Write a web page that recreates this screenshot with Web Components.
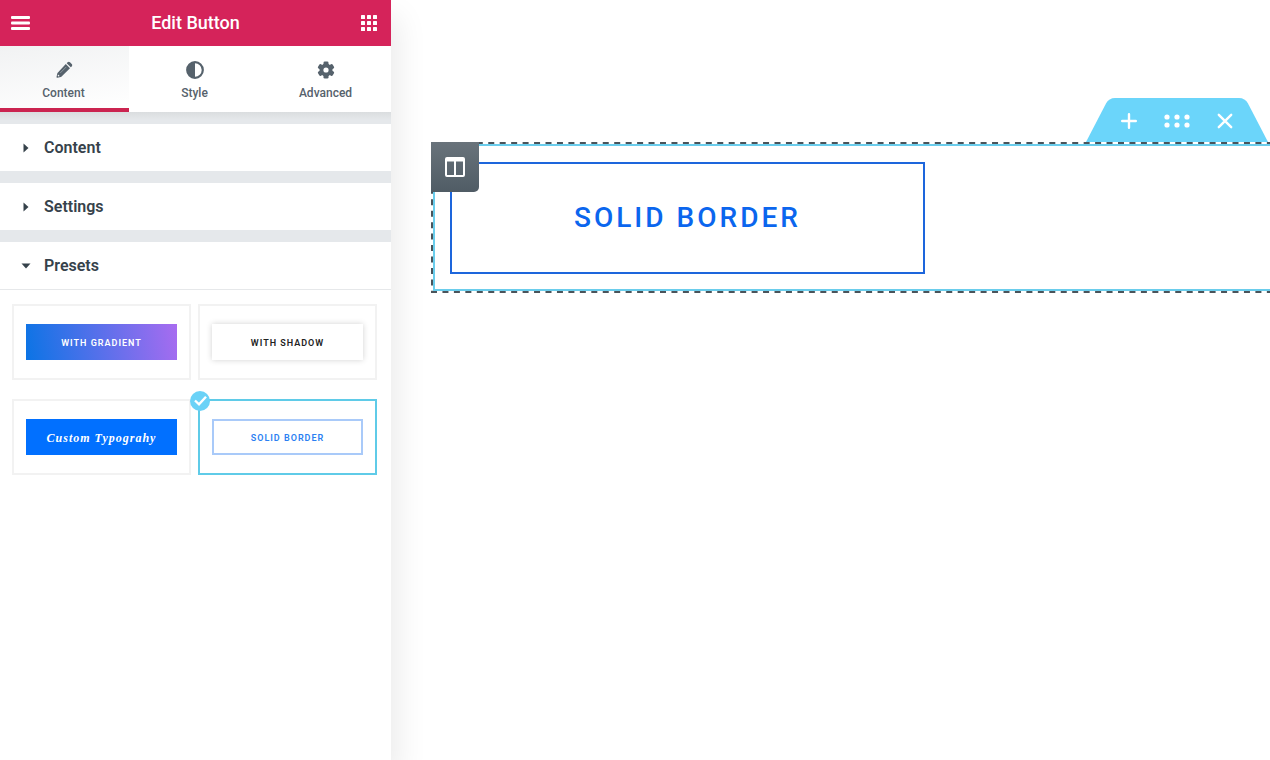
<!DOCTYPE html>
<html lang="en">
<head>
<meta charset="UTF-8">
<meta name="viewport" content="width=device-width, initial-scale=1.0">
<title>Edit Button</title>
<style>
    * { box-sizing: border-box; }

    body {
        margin: 0;
        font-family: Roboto, "Liberation Sans", sans-serif;
        background: #fff;
        color: #36424b;
    }
</style>
</head>
<body>
<editor-app>
    <editor-panel slot="panel" heading="Edit Button">
        <panel-tab slot="tabs" icon="pencil" active>Content</panel-tab>
        <panel-tab slot="tabs" icon="contrast">Style</panel-tab>
        <panel-tab slot="tabs" icon="gear">Advanced</panel-tab>

        <panel-section heading="Content"></panel-section>
        <panel-section heading="Settings"></panel-section>
        <panel-section heading="Presets" open>
            <preset-card variant="gradient">WITH GRADIENT</preset-card>
            <preset-card variant="shadow">WITH SHADOW</preset-card>
            <preset-card variant="type">Custom Typograhy</preset-card>
            <preset-card variant="border" selected>SOLID BORDER</preset-card>
        </panel-section>
    </editor-panel>

    <canvas-section>
        <canvas-button>SOLID BORDER</canvas-button>
    </canvas-section>
</editor-app>

<script>
/* ========================================
   Shared
   ======================================== */

const RESET = `
    *, *::before, *::after { box-sizing: border-box; }
    button {
        margin: 0;
        padding: 0;
        border: 0;
        background: none;
        color: inherit;
        font: inherit;
        cursor: pointer;
    }
    svg { display: block; }
`;

const TAB_ICONS = {
    pencil: `<svg width="18" height="18" viewBox="0 0 18 18" fill="currentColor">
        <path d="M10.800 3l4.200 4.200-8.400 8.400c-.2.2-.4.3-.7.4l-3.600.8c-.6.1-.9-.2-.8-.8l.8-3.600c.1-.3.2-.5.4-.7z"/>
        <path d="M11.700 2.200l.9-.9c.7-.7 1.700-.7 2.400 0l1.700 1.700c.7.7.7 1.700 0 2.400l-.9.9z"/>
        <path d="M5.300 11.900l6-6" stroke="#9aa4ac" stroke-width="0.8"/>
        <path d="M3 13.400l1.700 1.700-1.300.3-.7-.7z" fill="#fff"/>
    </svg>`,
    contrast: `<svg width="18" height="18" viewBox="0 0 18 18">
        <circle cx="9" cy="9" r="7.800" fill="none" stroke="currentColor" stroke-width="2.200"/>
        <path d="M9 1a8 8 0 0 0 0 16z" fill="currentColor"/>
    </svg>`,
    gear: `<svg width="18" height="18" viewBox="0 0 18 18">
        <g fill="currentColor">
            <circle cx="9" cy="9" r="6.500"/>
            <rect x="6.500" y="0.500" width="5" height="17" rx="1.300"/>
            <rect x="6.500" y="0.500" width="5" height="17" rx="1.300" transform="rotate(60 9 9)"/>
            <rect x="6.500" y="0.500" width="5" height="17" rx="1.300" transform="rotate(120 9 9)"/>
        </g>
        <circle cx="9" cy="9" r="2.600" fill="#fff"/>
    </svg>`
};

/* ========================================
   EditorApp - side panel + canvas
   ======================================== */

class EditorApp extends HTMLElement {
    constructor() {
        super();
        this.attachShadow({ mode: 'open' });
    }

    connectedCallback() {
        this.shadowRoot.innerHTML = `
        <style>
            ${RESET}
            :host {
                display: flex;
                min-height: 100vh;
                overflow: hidden;
            }
            main {
                flex: 1;
                min-width: 0;
                padding: 142px 0 40px 40px;
            }
        </style>
        <slot name="panel"></slot>
        <main><slot></slot></main>
        `;
    }
}

/* ========================================
   EditorPanel
   ======================================== */

class EditorPanel extends HTMLElement {
    constructor() {
        super();
        this.attachShadow({ mode: 'open' });
    }

    connectedCallback() {
        const heading = this.getAttribute('heading') || '';
        let dots = '';
        for (const y of [0, 6, 12]) {
            for (const x of [0, 6, 12]) {
                dots += `<rect x="${x}" y="${y}" width="4" height="4" rx="0.6"/>`;
            }
        }

        this.shadowRoot.innerHTML = `
        <style>
            ${RESET}
            :host {
                flex: none;
                width: 391px;
                background: #fff;
                box-shadow: 8px 16px 28px rgba(0, 0, 0, 0.08);
            }
            header {
                display: flex;
                align-items: center;
                justify-content: space-between;
                height: 46px;
                padding: 0 14px 0 11px;
                background: #d5235a;
                color: #fff;
            }
            h1 {
                margin: 0;
                font-size: 18px;
                line-height: 24px;
                font-weight: 500;
            }
            nav {
                display: grid;
                grid-template-columns: repeat(3, 1fr);
                gap: 2px;
                height: 66px;
            }
            .sections {
                display: flex;
                flex-direction: column;
                gap: 12px;
                padding-top: 12px;
                background: linear-gradient(#dadddf, #e5e8eb 8px);
            }
        </style>
        <header>
            <button aria-label="Menu">
                <svg width="19" height="14" viewBox="0 0 19 14" fill="#fff">
                    <rect width="19" height="3" rx="1"/>
                    <rect y="5.500" width="19" height="3" rx="1"/>
                    <rect y="11" width="19" height="3" rx="1"/>
                </svg>
            </button>
            <h1>${heading}</h1>
            <button aria-label="Widgets">
                <svg width="16" height="16" viewBox="0 0 16 16" fill="#fff">${dots}</svg>
            </button>
        </header>
        <nav><slot name="tabs"></slot></nav>
        <div class="sections"><slot></slot></div>
        `;
    }
}

/* ========================================
   PanelTab
   ======================================== */

class PanelTab extends HTMLElement {
    constructor() {
        super();
        this.attachShadow({ mode: 'open' });
    }

    connectedCallback() {
        this.shadowRoot.innerHTML = `
        <style>
            ${RESET}
            :host { display: flex; }
            button {
                flex: 1;
                display: flex;
                flex-direction: column;
                align-items: center;
                gap: 6px;
                padding: 15px 2px 0 0;
                border-bottom: 4px solid transparent;
                color: #56626c;
                font-size: 12px;
                line-height: 16px;
                font-weight: 500;
            }
            :host([active]) button {
                background: linear-gradient(170deg, #f1f2f3, #fff);
                border-bottom-color: #cb2450;
            }
        </style>
        <button>
            ${TAB_ICONS[this.getAttribute('icon')]}
            <slot></slot>
        </button>
        `;
    }
}

/* ========================================
   PanelSection - collapsible group
   ======================================== */

class PanelSection extends HTMLElement {
    constructor() {
        super();
        this.attachShadow({ mode: 'open' });
    }

    connectedCallback() {
        const heading = this.getAttribute('heading') || '';

        this.shadowRoot.innerHTML = `
        <style>
            ${RESET}
            :host {
                display: block;
                background: #fff;
            }
            h2 { margin: 0; }
            button {
                display: flex;
                align-items: center;
                gap: 12px;
                width: 100%;
                height: 47px;
                padding-left: 20px;
                font-size: 16px;
                line-height: 20px;
                font-weight: 600;
                text-align: left;
            }
            .caret { transform: rotate(-90deg); }
            .body { display: none; }
            :host([open]) .caret { transform: none; }
            :host([open]) .body {
                display: grid;
                grid-template-columns: repeat(2, 1fr);
                gap: 19px 7px;
                padding: 14px 14px 20px 12px;
                border-top: 1px solid #e6e8ea;
            }
        </style>
        <h2>
            <button>
                <svg class="caret" width="12" height="12" viewBox="0 0 12 12" fill="currentColor">
                    <path d="M1.500 3.500h9L6 8.500z"/>
                </svg>
                ${heading}
            </button>
        </h2>
        <div class="body"><slot></slot></div>
        `;

        this.shadowRoot.querySelector('button').addEventListener('click', () => {
            this.toggleAttribute('open');
        });
    }
}

/* ========================================
   PresetCard
   ======================================== */

class PresetCard extends HTMLElement {
    constructor() {
        super();
        this.attachShadow({ mode: 'open' });
    }

    connectedCallback() {
        const variant = this.getAttribute('variant');
        const selected = this.hasAttribute('selected');

        this.shadowRoot.innerHTML = `
        <style>
            ${RESET}
            :host {
                display: block;
                position: relative;
            }
            button {
                display: flex;
                align-items: center;
                width: 100%;
                height: 76px;
                padding: 0 12px;
                border: 2px solid #f2f2f2;
            }
            :host([selected]) button { border-color: #5fcbe8; }
            .preview {
                flex: 1;
                height: 36px;
                line-height: 38px;
                font-size: 9px;
                font-weight: 600;
                letter-spacing: 1px;
                text-align: center;
                white-space: nowrap;
            }
            .gradient {
                background: linear-gradient(80deg, #0b74e5, #a86cf0);
                color: #fff;
            }
            .shadow {
                background: #fff;
                box-shadow: 0 0 6px rgba(0, 0, 0, 0.18);
                color: #222;
            }
            .type {
                background: #0170ff;
                color: #fff;
                font-family: "Liberation Serif", serif;
                font-size: 12px;
                font-weight: 700;
                font-style: italic;
            }
            .border {
                border: 2px solid #a9caf9;
                line-height: 34px;
                color: #2b7ff2;
            }
            .check {
                position: absolute;
                top: -8px;
                left: -8px;
            }
        </style>
        <button aria-pressed="${selected}">
            <span class="preview ${variant}"><slot></slot></span>
        </button>
        ${selected ? `<svg class="check" width="20" height="20" viewBox="0 0 20 20">
            <circle cx="10" cy="10" r="10" fill="#6ad2f7"/>
            <path d="M5 9.500l4 3.800 7-7.600" fill="none" stroke="#fff" stroke-width="2.400"/>
        </svg>` : ''}
        `;
    }
}

/* ========================================
   CanvasSection - outlined row with its handles
   ======================================== */

class CanvasSection extends HTMLElement {
    constructor() {
        super();
        this.attachShadow({ mode: 'open' });
    }

    connectedCallback() {
        this.shadowRoot.innerHTML = `
        <style>
            ${RESET}
            :host {
                display: block;
                position: relative;
                padding: 2px 0 2px 2px;
            }
            .column {
                padding: 16px 0 15px 15px;
                border: 2px solid #6acdec;
                border-right: 0;
            }
            /* dashes run along the outside of the column border */
            .outline {
                position: absolute;
                inset: 0;
                width: 100%;
                height: 100%;
                pointer-events: none;
            }
            .handle {
                position: absolute;
                top: 0;
                left: 0;
                display: grid;
                place-items: center;
                width: 48px;
                height: 50px;
                border-radius: 0 0 5px 0;
                background: linear-gradient(#69737b, #505c65);
            }
            .toolbar {
                position: absolute;
                right: 2px;
                bottom: 100%;
                width: 182px;
                height: 44px;
            }
            .shape {
                position: absolute;
                inset: 0;
            }
            .actions {
                position: relative;
                display: flex;
                align-items: center;
                justify-content: space-between;
                height: 100%;
                padding: 2px 35px 0;
            }
        </style>
        <div class="column"><slot></slot></div>
        <div class="toolbar">
            <svg class="shape" width="182" height="44" viewBox="0 0 182 44">
                <path d="M0 44L20 5.500Q23 0 29 0H153Q159 0 162 5.500L182 44z" fill="#6bd5fa"/>
            </svg>
            <div class="actions">
                <button aria-label="Add section">
                    <svg width="16" height="16" viewBox="0 0 16 16" stroke="#fff" stroke-width="2.400" stroke-linecap="round">
                        <path d="M8 1.200v13.600M1.200 8h13.600"/>
                    </svg>
                </button>
                <button aria-label="Move section">
                    <svg width="26" height="16" viewBox="0 0 26 16" fill="#fff">
                        <circle cx="3" cy="4" r="2.600"/><circle cx="13" cy="4" r="2.600"/><circle cx="23" cy="4" r="2.600"/>
                        <circle cx="3" cy="12" r="2.600"/><circle cx="13" cy="12" r="2.600"/><circle cx="23" cy="12" r="2.600"/>
                    </svg>
                </button>
                <button aria-label="Delete section">
                    <svg width="16" height="16" viewBox="0 0 16 16" stroke="#fff" stroke-width="2.400" stroke-linecap="round">
                        <path d="M1.800 1.800l12.400 12.400M14.200 1.800L1.800 14.200"/>
                    </svg>
                </button>
            </div>
        </div>
        <svg class="outline" fill="none" stroke-width="2">
            <line stroke="#fff" x1="0" y1="1" x2="100%" y2="1"/>
            <g stroke="#4a545b" stroke-dasharray="6 5.450">
                <line x1="0" y1="1" x2="100%" y2="1"/>
                <line x1="1" y1="0" x2="1" y2="100%"/>
                <line x1="0" y1="100%" x2="100%" y2="100%" transform="translate(0 -1)"/>
            </g>
        </svg>
        <button class="handle" aria-label="Edit column">
            <svg width="20" height="20" viewBox="0 0 20 20" fill="none" stroke="#fff">
                <rect x="1" y="1" width="18" height="18" rx="1" stroke-width="2"/>
                <path d="M10 1v18" stroke-width="2"/>
                <path d="M1 3h18" stroke-width="3"/>
            </svg>
        </button>
        `;
    }
}

/* ========================================
   CanvasButton
   ======================================== */

class CanvasButton extends HTMLElement {
    constructor() {
        super();
        this.attachShadow({ mode: 'open' });
    }

    connectedCallback() {
        this.shadowRoot.innerHTML = `
        <style>
            ${RESET}
            :host { display: block; }
            button {
                display: block;
                padding: 38px 122px;
                border: 2px solid #1d66dc;
                color: #0b66ee;
                font-size: 28px;
                line-height: 32px;
                font-weight: 500;
                letter-spacing: 3px;
                white-space: nowrap;
            }
        </style>
        <button><slot></slot></button>
        `;
    }
}

customElements.define('editor-app', EditorApp);
customElements.define('editor-panel', EditorPanel);
customElements.define('panel-tab', PanelTab);
customElements.define('panel-section', PanelSection);
customElements.define('preset-card', PresetCard);
customElements.define('canvas-section', CanvasSection);
customElements.define('canvas-button', CanvasButton);
</script>
</body>
</html>
